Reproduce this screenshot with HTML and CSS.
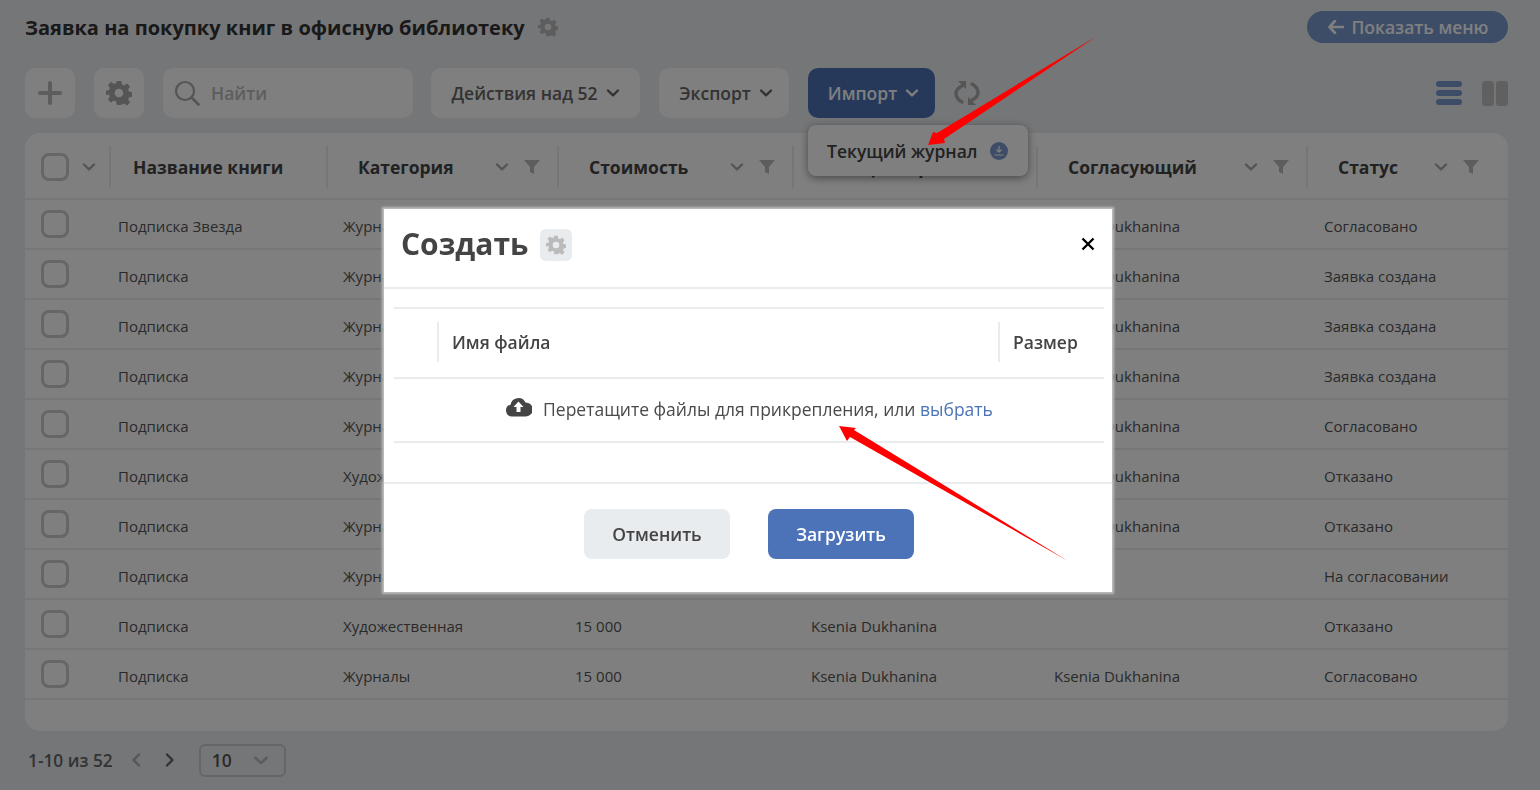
FILE: index.html
```html
<!DOCTYPE html>
<html lang="ru">
<head>
    <meta charset="UTF-8">
    <title>Заявка на покупку книг</title>
    <link rel="stylesheet" href="styles.css">
</head>
<body>
    <svg width="0" height="0" class="defs">
        <symbol id="gear" viewBox="0 0 24 24"><path d="M10 1h4l.7 3.2 1.9.8 2.8-1.8 2.8 2.8-1.8 2.8.8 1.9 3.2.7v4l-3.2.7-.8 1.9 1.8 2.8-2.8 2.8-2.8-1.8-1.9.8L14 23h-4l-.7-3.2-1.9-.8-2.8 1.8-2.8-2.8 1.8-2.8-.8-1.9L-.4 14v-4l3.2-.7.8-1.9L1.8 4.6l2.8-2.8 2.8 1.8 1.9-.8zM12 8a4 4 0 1 0 0 8 4 4 0 0 0 0-8z" fill-rule="evenodd" fill="currentColor"/></symbol>
        <symbol id="chev" viewBox="0 0 14 8"><path d="M2 1.500 7 6.300l5-4.800" fill="none" stroke="currentColor" stroke-width="2.400" stroke-linecap="round" stroke-linejoin="round"/></symbol>
        <symbol id="funnel" viewBox="0 0 16 16"><path d="M0 1h16L10 8v7L6 13V8z" fill="currentColor"/></symbol>
    </svg>

    <div class="page">
        <div class="title-row">
            <h1>Заявка на покупку книг в офисную библиотеку</h1>
            <svg class="title-gear"><use href="#gear"/></svg>
            <a class="show-menu"><svg width="16" height="14" viewBox="0 0 16 14"><path d="M7 1 1.500 7 7 13M2 7h13" fill="none" stroke="currentColor" stroke-width="2.600" stroke-linecap="round" stroke-linejoin="round"/></svg>Показать меню</a>
        </div>

        <div class="toolbar">
            <button class="tool square plus"><svg width="24" height="24" viewBox="0 0 24 24"><path d="M12 2v20M2 12h20" stroke="currentColor" stroke-width="4" stroke-linecap="round"/></svg></button>
            <button class="tool square"><svg width="26" height="26"><use href="#gear"/></svg></button>
            <div class="search">
                <svg width="26" height="26" viewBox="0 0 26 26"><circle cx="11" cy="11" r="9" fill="none" stroke="currentColor" stroke-width="2.200"/><path d="m17.500 17.500 7 7" stroke="currentColor" stroke-width="2.600" stroke-linecap="round"/></svg>
                <span>Найти</span>
            </div>
            <button class="tool actions">Действия над 52 <svg class="chev"><use href="#chev"/></svg></button>
            <button class="tool export">Экспорт <svg class="chev"><use href="#chev"/></svg></button>
            <div class="import-wrap">
                <button class="tool import">Импорт <svg class="chev"><use href="#chev"/></svg></button>
                <div class="dropdown">Текущий журнал
                    <span class="dl-icon"><svg width="10" height="10" viewBox="0 0 10 10"><path d="M5 .5v5.500M2.800 4 5 6.200 7.200 4M1 9h8" fill="none" stroke="currentColor" stroke-width="1.200" stroke-linecap="round" stroke-linejoin="round"/></svg></span>
                </div>
            </div>
            <svg class="refresh" width="26" height="28" viewBox="0 0 26 28"><path d="M8 7C4 9 2 11 2 14c0 4 2 7 6 9M18 21c4-2 6-4 6-7 0-4-2-7-6-9" fill="none" stroke="currentColor" stroke-width="3.400" stroke-linecap="round"/><path d="M4 2h8v8zM22 26h-8v-8z" fill="currentColor"/></svg>
            <div class="view-switch">
                <span class="list-view"><i></i><i></i><i></i></span>
                <span class="col-view"><i></i><i></i></span>
            </div>
        </div>

        <div class="card">
            <div class="grid head">
                <div class="hcell check-head"><span class="box"></span><svg class="chev small"><use href="#chev"/></svg></div>
                <div class="hcell name-head">Название книги</div>
                <div class="hcell">Категория<span class="hicons"><svg class="chev small"><use href="#chev"/></svg><svg class="funnel"><use href="#funnel"/></svg></span></div>
                <div class="hcell">Стоимость<span class="hicons"><svg class="chev small"><use href="#chev"/></svg><svg class="funnel"><use href="#funnel"/></svg></span></div>
                <div class="hcell">Инициатор<span class="hicons"><svg class="chev small"><use href="#chev"/></svg><svg class="funnel"><use href="#funnel"/></svg></span></div>
                <div class="hcell">Согласующий<span class="hicons"><svg class="chev small"><use href="#chev"/></svg><svg class="funnel"><use href="#funnel"/></svg></span></div>
                <div class="hcell last-head">Статус<span class="hicons"><svg class="chev small"><use href="#chev"/></svg><svg class="funnel"><use href="#funnel"/></svg></span></div>
            </div>
            <div class="grid row"><div class="check"><span class="box"></span></div><div>Подписка Звезда</div><div>Журналы</div><div>15 000</div><div>Ksenia Dukhanina</div><div>Ksenia Dukhanina</div><div>Согласовано</div></div>
            <div class="grid row"><div class="check"><span class="box"></span></div><div>Подписка</div><div>Журналы</div><div>15 000</div><div>Ksenia Dukhanina</div><div>Ksenia Dukhanina</div><div>Заявка создана</div></div>
            <div class="grid row"><div class="check"><span class="box"></span></div><div>Подписка</div><div>Журналы</div><div>15 000</div><div>Ksenia Dukhanina</div><div>Ksenia Dukhanina</div><div>Заявка создана</div></div>
            <div class="grid row"><div class="check"><span class="box"></span></div><div>Подписка</div><div>Журналы</div><div>15 000</div><div>Ksenia Dukhanina</div><div>Ksenia Dukhanina</div><div>Заявка создана</div></div>
            <div class="grid row"><div class="check"><span class="box"></span></div><div>Подписка</div><div>Журналы</div><div>15 000</div><div>Ksenia Dukhanina</div><div>Ksenia Dukhanina</div><div>Согласовано</div></div>
            <div class="grid row"><div class="check"><span class="box"></span></div><div>Подписка</div><div>Художественная</div><div>15 000</div><div>Ksenia Dukhanina</div><div>Ksenia Dukhanina</div><div>Отказано</div></div>
            <div class="grid row"><div class="check"><span class="box"></span></div><div>Подписка</div><div>Журналы</div><div>15 000</div><div>Ksenia Dukhanina</div><div>Ksenia Dukhanina</div><div>Отказано</div></div>
            <div class="grid row"><div class="check"><span class="box"></span></div><div>Подписка</div><div>Журналы</div><div>15 000</div><div>Ksenia Dukhanina</div><div></div><div>На согласовании</div></div>
            <div class="grid row"><div class="check"><span class="box"></span></div><div>Подписка</div><div>Художественная</div><div>15 000</div><div>Ksenia Dukhanina</div><div></div><div>Отказано</div></div>
            <div class="grid row"><div class="check"><span class="box"></span></div><div>Подписка</div><div>Журналы</div><div>15 000</div><div>Ksenia Dukhanina</div><div>Ksenia Dukhanina</div><div>Согласовано</div></div>
        </div>

        <div class="pager">
            <span class="count">1-10 из 52</span>
            <svg class="prev" width="10" height="14" viewBox="0 0 10 14"><path d="M8 1.500 2.500 7 8 12.500" fill="none" stroke="currentColor" stroke-width="2.400" stroke-linecap="round" stroke-linejoin="round"/></svg>
            <svg class="next" width="10" height="14" viewBox="0 0 10 14"><path d="M2 1.500 7.500 7 2 12.500" fill="none" stroke="currentColor" stroke-width="2.400" stroke-linecap="round" stroke-linejoin="round"/></svg>
            <div class="per-page">10<svg class="chev"><use href="#chev"/></svg></div>
        </div>
    </div>

    <div class="overlay">
        <div class="modal">
            <div class="modal-head">
                <h2>Создать</h2>
                <span class="modal-gear"><svg width="20" height="20"><use href="#gear"/></svg></span>
                <svg class="close" width="14" height="14" viewBox="0 0 14 14"><path d="M1.500 1.500l11 11M12.500 1.500l-11 11" stroke="currentColor" stroke-width="2.400"/></svg>
            </div>
            <div class="files">
                <div class="files-head">
                    <div class="col-blank"></div>
                    <div class="col-name">Имя файла</div>
                    <div class="col-size">Размер</div>
                </div>
                <div class="drop">
                    <svg width="27" height="21" viewBox="0 0 27 21"><path d="M7 20.500a6 6 0 0 1-1.500-11.800A8 8 0 0 1 20.500 6.500 7 7 0 0 1 21 20.500z" fill="currentColor"/><path d="M13.500 5.500 8.500 11h3v5h4v-5h3z" fill="#fff"/></svg>
                    <span>Перетащите файлы для прикрепления, или <a>выбрать</a></span>
                </div>
            </div>
            <div class="modal-foot">
                <button class="btn cancel">Отменить</button>
                <button class="btn upload">Загрузить</button>
            </div>
        </div>
    </div>

    <!-- стрелки поверх скриншота -->
    <svg class="arrows" width="1540" height="790" viewBox="0 0 1540 790">
        <polygon points="1097,36 944,139 945,143 928,145 933,132 937,133" fill="#ff0000"/>
        <polygon points="1068,561 850,437 847,441 839,426 856,428 854,430" fill="#ff0000"/>
    </svg>
</body>
</html>
```
FILE: styles.css
```css
* {
    box-sizing: border-box;
}
body {
    margin: 0;
    background: #ebedf0;
    color: #333;
    font-family: 'Open Sans', 'Noto Sans', sans-serif;
    height: 790px;
    overflow: hidden;
}
.defs {
    position: absolute;
}
.page {
    padding: 0 32px 0 25px;
}
button {
    font-family: inherit;
    border: none;
}

.title-row {
    display: flex;
    align-items: center;
    height: 68px;
    padding-bottom: 14px;
}
h1 {
    margin: 0;
    font-size: 20px;
    font-weight: 700;
    color: #333;
}
.title-gear {
    width: 20px;
    height: 20px;
    margin-left: 13px;
    color: #bbb;
}
.show-menu {
    margin-left: auto;
    width: 201px;
    height: 32px;
    border-radius: 16px;
    background: #7a9ad0;
    color: #fff;
    font-size: 17.500px;
    font-weight: 600;
    display: flex;
    align-items: center;
    justify-content: center;
    gap: 7px;
    padding-left: 2px;
}

.toolbar {
    display: flex;
    align-items: center;
    height: 50px;
}
.tool {
    height: 50px;
    border-radius: 10px;
    background: #fff;
    color: #666;
    font-size: 17.500px;
    font-weight: 600;
    display: flex;
    align-items: center;
    justify-content: center;
    gap: 8px;
    padding: 0;
}
.tool.square {
    width: 50px;
    margin-right: 19px;
    color: #aaa;
}
.tool.plus {
    color: #bbb;
}
.search {
    width: 250px;
    height: 50px;
    border-radius: 10px;
    background: #fff;
    color: #bbb;
    display: flex;
    align-items: center;
    padding-left: 11px;
    gap: 11px;
    font-size: 17.500px;
    font-weight: 600;
    line-height: 48px;
}
.search svg {
    color: #aaa;
}
.actions {
    width: 209px;
    margin-left: 18px;
}
.tool.export {
    width: 130px;
    margin-left: 19px;
    padding-left: 4px;
}
.import-wrap {
    position: relative;
    margin-left: 19px;
}
.tool.import {
    width: 127px;
    background: #4c73b7;
    color: #fff;
    padding-left: 4px;
}
.chev {
    width: 14px;
    height: 8px;
    color: currentColor;
}
.chev.small {
    color: #aaa;
}
.dropdown {
    position: absolute;
    top: 57px;
    left: 0;
    width: 220px;
    height: 51px;
    background: #fff;
    border-radius: 8px;
    box-shadow: 0 2px 8px rgba(0, 0, 0, 0.45);
    display: flex;
    align-items: center;
    padding-left: 19px;
    font-size: 17.500px;
    font-weight: 600;
    color: #444;
    z-index: 2;
    gap: 12px;
}
.dl-icon {
    width: 18px;
    height: 18px;
    border-radius: 50%;
    background: #7a9ad0;
    color: #fff;
    display: flex;
    align-items: center;
    justify-content: center;
}
.refresh {
    margin-left: 19px;
    color: #aaa;
}
.view-switch {
    margin-left: auto;
    display: flex;
    gap: 20px;
    align-items: center;
}
.list-view {
    width: 26px;
    display: flex;
    flex-direction: column;
    gap: 3px;
}
.list-view i {
    height: 6px;
    border-radius: 3px;
    background: #7a9ad0;
}
.col-view {
    display: flex;
    gap: 2px;
    height: 25px;
}
.col-view i {
    width: 12px;
    border-radius: 3px;
    background: #c0c0c0;
}

.card {
    margin-top: 15px;
    height: 598px;
    background: #fff;
    border-radius: 15px;
}
.grid {
    display: grid;
    grid-template-columns: 84px 217px 231px 235px 244px 270px 202px;
    border-bottom: 2px solid #e8ecef;
}
.head {
    height: 67px;
    align-items: center;
}
.hcell {
    height: 42px;
    margin-top: 2px;
    border-left: 2px solid #e8ecef;
    padding-left: 30px;
    padding-right: 17px;
    display: flex;
    align-items: center;
    font-size: 17.500px;
    font-weight: 700;
    color: #444;
}
.name-head {
    padding-left: 22px;
}
.last-head {
    padding-right: 29px;
}
.check-head {
    border-left: none;
    padding: 0 0 0 16px;
    gap: 13px;
}
.hicons {
    margin-left: auto;
    display: flex;
    align-items: center;
    gap: 15px;
}
.funnel {
    width: 16px;
    height: 16px;
    color: #bbb;
}
.box {
    display: block;
    width: 28px;
    height: 28px;
    border: 3px solid #ccc;
    border-radius: 8px;
    background: #fff;
    flex: none;
}
.row {
    height: 50px;
    font-size: 15px;
    color: #555;
    line-height: 53px;
}
.row > div {
    padding-left: 18px;
    white-space: nowrap;
}
.row > div:nth-child(2) {
    padding-left: 9px;
}
.row > div:nth-child(3) {
    padding-left: 17px;
}
.row > div:nth-child(5) {
    padding-left: 19px;
}
.row > .check {
    padding: 10px 0 0 16px;
    line-height: 0;
}

.pager {
    display: flex;
    align-items: center;
    height: 58px;
    padding-left: 3px;
    font-size: 17.300px;
    font-weight: 600;
    color: #666;
}
.prev {
    margin-left: 18px;
    color: #aaa;
}
.next {
    margin-left: 24px;
    color: #666;
}
.per-page {
    margin-left: 24px;
    width: 87px;
    height: 33px;
    border: 2px solid #ccc;
    border-radius: 6px;
    display: flex;
    align-items: center;
    justify-content: space-between;
    padding: 0 15px 0 11px;
    font-size: 17.500px;
    color: #555;
}
.per-page .chev {
    width: 16px;
    height: 9px;
    color: #bbb;
}

.overlay {
    position: fixed;
    inset: 0;
    z-index: 5;
    background: rgba(0, 0, 0, 0.5);
    padding: 209px 0 0 384px;
}
.modal {
    width: 728px;
    height: 383px;
    background: #fff;
    box-shadow: 0 0 2px 2px #bdbdbd;
}
.modal-head {
    height: 80px;
    border-bottom: 2px solid #e8ecef;
    display: flex;
    align-items: center;
    padding: 0 17px 9px;
}
h2 {
    margin: 0;
    font-size: 30px;
    font-weight: 700;
    color: #444;
}
.modal-gear {
    width: 32px;
    height: 32px;
    margin-left: 12px;
    margin-top: 3px;
    border-radius: 6px;
    background: #e8ecef;
    color: #bbb;
    display: flex;
    align-items: center;
    justify-content: center;
}
.close {
    margin-left: auto;
    color: #000;
}
.files {
    margin: 18px 8px 0 10px;
    border-top: 2px solid #e8ecef;
}
.files-head {
    display: flex;
    height: 70px;
    align-items: center;
    border-bottom: 2px solid #e8ecef;
    font-size: 17.500px;
    font-weight: 600;
    color: #444;
    padding-bottom: 2px;
}
.col-blank {
    width: 43px;
}
.col-name, .col-size {
    height: 40px;
    display: flex;
    align-items: center;
    border-left: 2px solid #e8ecef;
    padding-left: 13px;
}
.col-name {
    width: 561px;
}
.drop {
    height: 64px;
    border-bottom: 2px solid #e8ecef;
    display: flex;
    align-items: center;
    justify-content: center;
    gap: 11px;
    font-size: 17.500px;
    color: #4a4a4a;
    padding-bottom: 2px;
}
.drop svg {
    color: #444;
    margin-top: -5px;
}
.drop a {
    color: #4c73b7;
}
.modal-foot {
    margin-top: 39px;
    border-top: 2px solid #e8ecef;
    display: flex;
    justify-content: center;
    gap: 38px;
    padding: 25px 0 0 2px;
}
.btn {
    width: 146px;
    height: 50px;
    border-radius: 8px;
    font-size: 17.500px;
    font-weight: 600;
}
.cancel {
    background: #e8ecef;
    color: #444;
}
.upload {
    background: #4c73b7;
    color: #fff;
}

.arrows {
    position: fixed;
    top: 0;
    left: 0;
    z-index: 6;
    pointer-events: none;
}
```
